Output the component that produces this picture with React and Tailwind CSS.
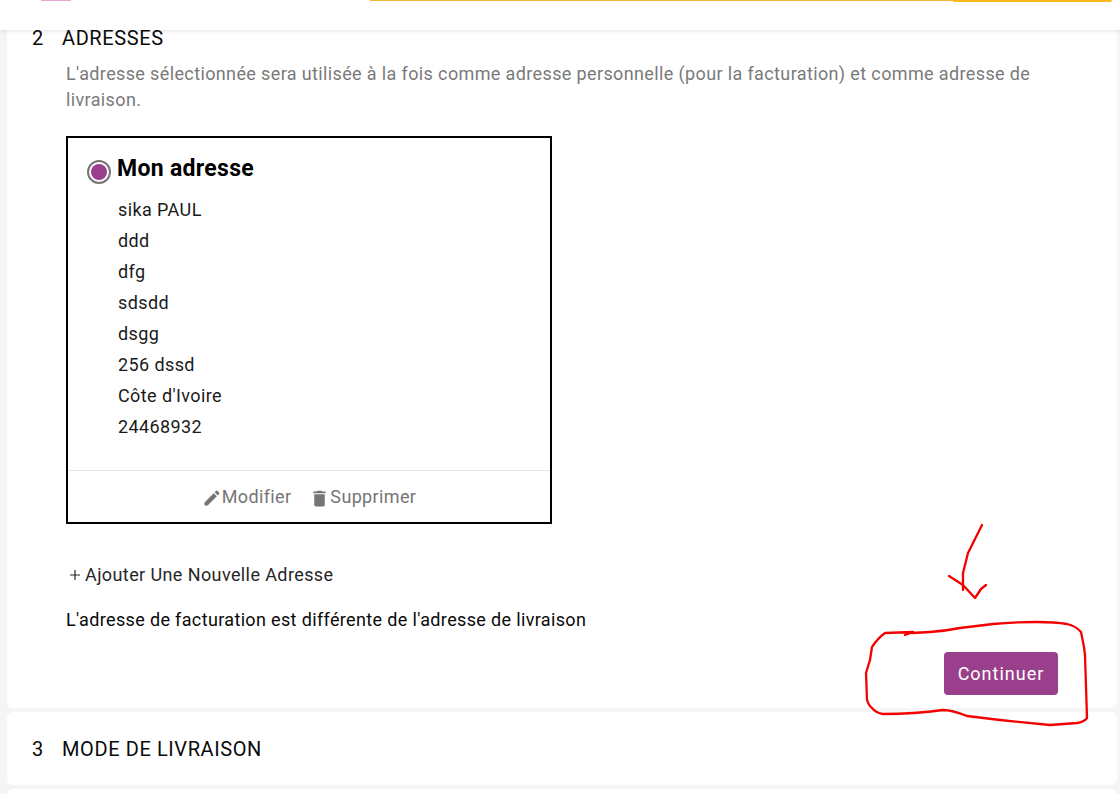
// Checkout step 2: address selection, with the red hand-drawn annotation on top.

const ADDRESS_LINES = [
  "sika PAUL",
  "ddd",
  "dfg",
  "sdsdd",
  "dsgg",
  "256 dssd",
  "Côte d'Ivoire",
  "24468932",
];

const LOOP =
  "M905 635 L913 632 L885 633 Q878 638 872 647 L870 660 L866 673 L867 700 Q869 706 872 708 Q876 713 883 714 Q915 714 943 710 Q952 710 967 716 L1000 720 L1050 725 L1077 723 Q1084 722 1087 718 L1085 655 L1084 647 L1081 632 Q1076 626 1067 624 Q1055 622 1037 622 Q1012 622 993 624 L960 628 Q945 631 930 632 L912 633";

function PencilIcon() {
  return (
    <svg viewBox="0 0 24 24" className="mt-[3px] h-[20px] w-[20px] fill-[#757575]">
      <path d="M3 17.25V21h3.75L17.81 9.94l-3.75-3.75L3 17.25zM20.71 7.04a1 1 0 0 0 0-1.41l-2.34-2.34a1 1 0 0 0-1.41 0l-1.83 1.83 3.75 3.75 1.83-1.83z" />
    </svg>
  );
}

function TrashIcon() {
  return (
    <svg viewBox="0 0 24 24" className="mt-[3px] h-[21px] w-[21px] fill-[#757575]">
      <path d="M6 19c0 1.1.9 2 2 2h8c1.1 0 2-.9 2-2V7H6v12zM19 4h-3.5l-1-1h-5l-1 1H5v2h14V4z" />
    </svg>
  );
}

function StepHeader({ number, title }) {
  return (
    <div className="flex text-[20px] leading-[24px] tracking-[0.6px] text-[#0a0a0a]">
      <span className="w-[30px]">{number}</span>
      <span>{title}</span>
    </div>
  );
}

export default function App() {
  return (
    <div className="relative h-[794px] overflow-hidden bg-[#f5f5f5] font-['Roboto',sans-serif]">
      {/* Sticky top bar, cut off by the screenshot */}
      <header className="relative z-10 flex h-[30px] items-start bg-white shadow-[0_1px_4px_rgba(0,0,0,0.12)]">
        <div className="ml-[41px] h-px w-[30px] bg-[#e9a6d0]" />
        <div className="ml-[299px] flex h-[2px] w-[742px] rounded-bl-md">
          <div className="h-px w-[583px] bg-[#f3b73a]" />
          <div className="h-[2px] w-[159px] rounded-br-md bg-[#fbb81a]" />
        </div>
      </header>

      <main className="ml-[7px] mr-[3px] flex flex-col gap-[4px]">
        <section className="h-[678px] rounded-b-md bg-white pl-[25px] pr-[59px]">
          <div className="-mt-[4px]">
            <StepHeader number="2" title="ADRESSES" />
          </div>
          <div className="pl-[34px]">
            <p className="mt-[11px] text-[18px] leading-[26px] tracking-[0.37px] text-[#7a7a7a]">
              L'adresse sélectionnée sera utilisée à la fois comme adresse personnelle (pour la facturation) et comme adresse de livraison.
            </p>

            <div className="mt-[23px] w-[486px] border-2 border-black">
              <div className="h-[332px] pl-[19px] pt-[16px]">
                <div className="flex items-start gap-[6px]">
                  <span className="mt-[6px] flex h-[24px] w-[24px] items-center justify-center rounded-full border-[2px] border-[#757575]">
                    <span className="h-[16px] w-[16px] rounded-full bg-[#993f8b]" />
                  </span>
                  <h3 className="text-[23px] font-bold leading-[30px] tracking-[0.3px] text-black">Mon adresse</h3>
                </div>
                <div className="mt-[10px] pl-[31px] text-[18px] leading-[31px] tracking-[0.4px] text-[#1a1a1a]">
                  {ADDRESS_LINES.map((line) => (
                    <div key={line}>{line}</div>
                  ))}
                </div>
              </div>
              <div className="flex h-[52px] items-center justify-center gap-[18px] border-t border-[#e6e6e6] text-[18px] tracking-[0.35px] text-[#757575]">
                <span className="flex items-center">
                  <PencilIcon />
                  Modifier
                </span>
                <span className="flex items-center">
                  <TrashIcon />
                  Supprimer
                </span>
              </div>
            </div>

            <div className="mt-[39px] flex items-center pl-[3px] text-[18px] leading-[24px] tracking-[0.4px] text-[#262626]">
              <svg viewBox="0 0 12 12" className="mr-[4px] h-[12px] w-[12px] stroke-[#262626] stroke-[1.2]">
                <path d="M6 1v10M1 6h10" />
              </svg>
              Ajouter Une Nouvelle Adresse
            </div>
            <p className="mt-[21px] text-[18px] leading-[24px] tracking-[0.35px] text-[#0a0a0a]">
              L'adresse de facturation est différente de l'adresse de livraison
            </p>
            <div className="mt-[20px] flex justify-end">
              <button className="h-[43px] w-[114px] rounded-[4px] bg-[#993f8b] text-[18px] tracking-[1px] text-white">
                Continuer
              </button>
            </div>
          </div>
        </section>

        <section className="flex h-[73px] items-center rounded-md bg-white pl-[25px]">
          <StepHeader number="3" title="MODE DE LIVRAISON" />
        </section>

        <section className="h-[40px] rounded-t-md bg-white" />
      </main>

      {/* Red pen annotation drawn over the screenshot */}
      <svg viewBox="0 0 1120 794" className="pointer-events-none absolute inset-0 z-20 h-[794px] w-[1120px] fill-none stroke-[#f40000] stroke-[2.3]">
        <path d={LOOP} strokeLinejoin="round" strokeLinecap="round" />
        <path d="M982 525 L968 553 L963 573 L963 590" strokeLinejoin="round" strokeLinecap="round" />
        <path d="M949 576 L963 585 L975 598 L981 589 L986 585" strokeLinejoin="round" strokeLinecap="round" />
      </svg>
    </div>
  );
}
